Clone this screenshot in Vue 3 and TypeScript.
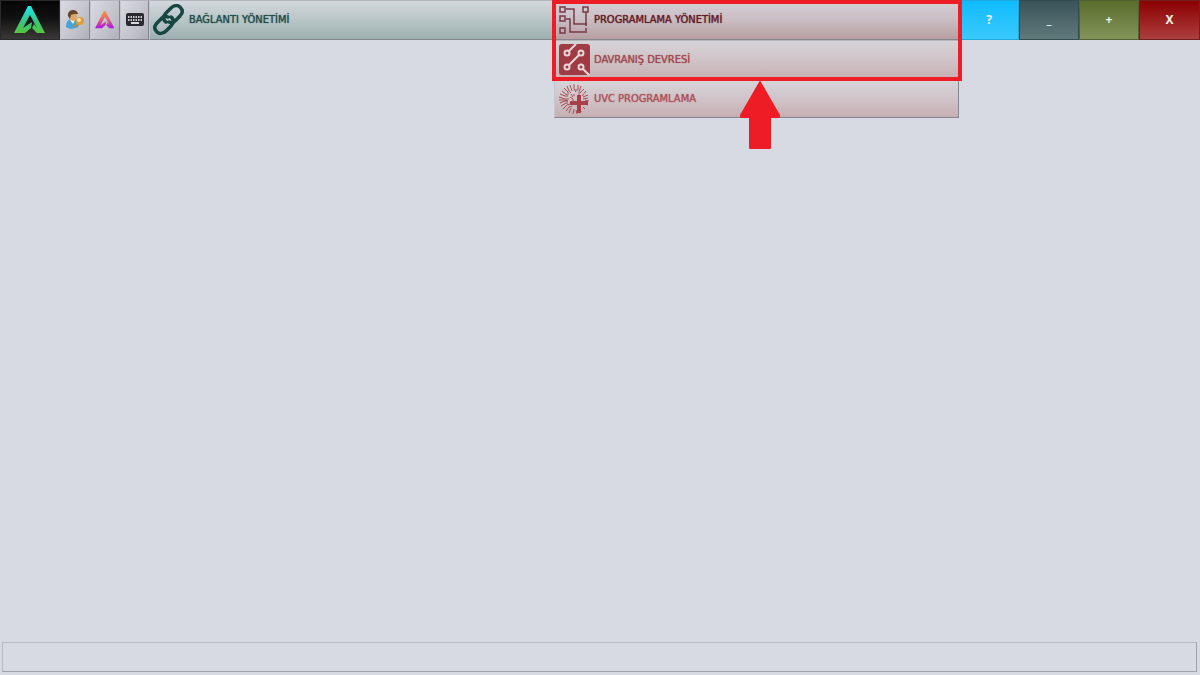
<script setup lang="ts">
interface WindowAction {
  id: string
  symbol: string
  label: string
}

const windowActions: WindowAction[] = [
  { id: 'help', symbol: '?', label: 'Yardım' },
  { id: 'minimize', symbol: '_', label: 'Küçült' },
  { id: 'maximize', symbol: '+', label: 'Büyüt' },
  { id: 'close', symbol: 'X', label: 'Kapat' },
]
</script>

<template>
  <div class="app">
    <header class="toolbar">
      <button class="logo" type="button" aria-label="Ana menü">
        <svg width="32" height="28" viewBox="0 0 32 28">
          <defs>
            <linearGradient id="green" x1="0" y1="0" x2="0" y2="1">
              <stop offset="0" stop-color="#20e8ee" />
              <stop offset="0.55" stop-color="#36c585" />
              <stop offset="1" stop-color="#57c53c" />
            </linearGradient>
          </defs>
          <path fill="url(#green)" d="M14 0h3l14 27h-8l-5-5 2-4 3 4-7-13-7 13 9-6-1 6-6 5H0z" />
        </svg>
      </button>
      <button class="tool" type="button" aria-label="Kullanıcı">
        <svg width="20" height="20" viewBox="0 0 20 20">
          <path d="M1 17c0-5 2-8 6-8 5 0 7 3 7 7-3 3-9 4-13 1z" fill="#4aa3d3" />
          <path d="M5 10l3 4 2-4z" fill="#e9f4f8" />
          <ellipse cx="8" cy="6" rx="4" ry="5" fill="#dda66b" />
          <path d="M3 6c-1-7 9-8 10-2L9 4 6 5 5 9z" fill="#69452a" />
          <path d="M9 16l4-4 2 2-4 3z" fill="#c98a30" />
          <circle cx="15" cy="11" r="4" fill="#e09c3c" />
          <circle cx="14" cy="10" r="2" fill="#ffdf9f" />
        </svg>
      </button>
      <button class="tool" type="button" aria-label="Uygulama">
        <svg width="20" height="18" viewBox="0 0 32 28">
          <defs>
            <linearGradient id="sunset" x1="0" y1="0" x2="0" y2="1">
              <stop offset="0" stop-color="#f79a35" />
              <stop offset="0.5" stop-color="#e2627e" />
              <stop offset="1" stop-color="#ac16df" />
            </linearGradient>
          </defs>
          <path fill="url(#sunset)" d="M14 0h3l14 27h-8l-5-5 2-4 3 4-7-13-7 13 9-6-1 6-6 5H0z" />
        </svg>
      </button>
      <button class="tool" type="button" aria-label="Klavye">
        <svg width="18" height="14" viewBox="0 0 18 14">
          <rect width="18" height="13" rx="2" fill="#29292f" />
          <path d="M2 4h14M2 7h14" stroke="#c5c5ca" stroke-width="2" stroke-dasharray="1.5 1" />
          <path d="M5 10h8" stroke="#d5d5da" stroke-width="2" />
        </svg>
      </button>

      <button class="menu link" type="button">
        <svg class="icon" width="32" height="32" viewBox="0 0 32 32" fill="none" stroke="#184640" stroke-width="3.5" stroke-linecap="round">
          <path d="M13 18c-3-2-3-6 0-9l5-5c3-3 7-3 9-1 3 3 3 6 0 9l-5 5c-2 2-4 2-6 1" />
          <path d="M18 13c3 2 3 6 0 9l-5 5c-3 3-7 3-9 1-3-3-3-6 0-9l5-5c2-2 4-2 6-1" />
        </svg>
        <span>BAĞLANTI YÖNETİMİ</span>
      </button>

      <div class="group">
        <button class="menu program" type="button" aria-expanded="true">
          <svg class="icon" width="32" height="32" viewBox="0 0 32 32" fill="none" stroke="#773b45">
            <path d="M2 3h5v5H2zM2 12h5v5H2zM2 24h5v5H2zM25 3h5v5h-5z" stroke-width="1.5" />
            <path d="M8 5h8v15h13M8 15h4v13h17M28 8v14m0 2v3" stroke-width="1.5" />
          </svg>
          <span>PROGRAMLAMA YÖNETİMİ</span>
        </button>
        <div class="dropdown">
          <button class="menu behaviour" type="button">
            <svg class="icon" width="32" height="32" viewBox="0 0 32 32">
              <rect x="1" width="31" height="31" rx="3" fill="#a03b43" />
              <g fill="none" stroke="#e8d8da" stroke-width="2">
                <circle cx="9" cy="9" r="2.5" />
                <circle cx="23" cy="9" r="2.5" />
                <circle cx="9" cy="23" r="2.5" />
                <circle cx="23" cy="23" r="2.5" />
                <path d="M11 7l7-7M21 11L11 21M25 25l6 6" />
              </g>
            </svg>
            <span>DAVRANIŞ DEVRESİ</span>
          </button>
          <button class="menu uvc" type="button">
            <svg class="icon" width="32" height="32" viewBox="0 0 32 32">
              <g fill="none" stroke="#a94d55">
                <path d="M12 2l2 6M16 1v5l2 3M20 2v5h-3M23 3l-2 6v3M26 6l-4 4M28 8l-4 5M30 12l-5 2M9 3l2 5 2 2M6 5l4 4v3M4 8l5 4M2 11l5 2h3M1 14l6 2h4M1 17h5l4 1M2 20l5-2h3M3 23l5-3h2M5 26l4-4 3-1M8 28l3-4 3-1M11 30l2-5M15 31l1-5M19 31l-1-4M23 29l-1-3M27 26l-2-2M30 22l-4-1M31 18l-4-1M30 15l-5 1" />
                <path d="M13 11l2 3M16 11v2M12 14l3 2M12 20h3M14 22l2-2M14 17h2" />
              </g>
              <path d="M19 12h4v6h7v4h-7v8h-4v-8h-7v-4h7z" fill="#a83e49" />
            </svg>
            <span>UVC PROGRAMLAMA</span>
          </button>
        </div>
        <div class="highlight"></div>
        <svg class="arrow" width="40" height="69" viewBox="0 0 40 69">
          <path d="M19 1q1-2 2 0l19 33q1 3-2 3h-7v30q0 1-1 1H10q-1 0-1-1V37H2q-3 0-2-3z" fill="#ee1c25" />
        </svg>
      </div>

      <button
        v-for="action in windowActions"
        :key="action.id"
        class="window"
        :class="action.id"
        type="button"
        :aria-label="action.label"
      >{{ action.symbol }}</button>
    </header>
    <main class="workspace"></main>
    <footer class="status"></footer>
  </div>
</template>

<style>
body {
  background: #d7dae2;
}
</style>

<style scoped>
.app {
  min-height: 100vh;
  display: flex;
  flex-direction: column;
  background: #d7dae2;
  font-family: "DejaVu Sans Condensed", "DejaVu Sans", sans-serif;
}
.toolbar {
  height: 40px;
  display: grid;
  grid-template-columns: 60px 30px 30px 29px repeat(2, minmax(0, 1fr)) repeat(3, 60px) 61px;
}
button {
  box-sizing: border-box;
  margin: 0;
  padding: 0;
  border: 1px solid;
  border-color: #b5b5bd #85858e #85858e #c5c5ce;
  font-family: inherit;
  cursor: pointer;
}
.logo,
.tool {
  display: flex;
  align-items: center;
  justify-content: center;
}
.logo {
  background: linear-gradient(#050505, #111 45%, #3b3937);
  border-color: #29292b;
}
.tool {
  background: linear-gradient(120deg, #dadae1, #c2c3cb 60%, #afb1b9);
}
.menu {
  width: 100%;
  height: 40px;
  display: flex;
  align-items: center;
  gap: 4px;
  padding-left: 3px;
  font-size: 11px;
  line-height: 16px;
  font-weight: 400;
  text-align: left;
  text-shadow: 0 0 1px currentColor;
}
.icon {
  flex: none;
}
.link {
  color: #244c4a;
  background: linear-gradient(#d4d8dc, #b8c5c7 50%, #9db0b0);
}
.group {
  position: relative;
}
.program {
  color: #671b25;
  background: linear-gradient(#d5d0d7, #c9bdc3 50%, #b79ea2);
}
.dropdown {
  position: absolute;
  top: 100%;
  left: 0;
  right: 0;
}
.behaviour,
.uvc {
  color: #a14850;
  background: linear-gradient(#d5d4d8, #d0c3c8 50%, #c6afb2);
}
.uvc {
  height: 38px;
  color: #ad505a;
}
.highlight {
  position: absolute;
  top: 0;
  left: -2px;
  right: -3px;
  height: 81px;
  box-sizing: border-box;
  border: 4px solid #ee1c25;
  pointer-events: none;
}
.arrow {
  position: absolute;
  top: 81px;
  left: 186px;
  pointer-events: none;
}
.window {
  color: #eef0e5;
  font-family: "Noto Sans", sans-serif;
  font-size: 12px;
  line-height: 16px;
  font-weight: 700;
}
.help {
  background: linear-gradient(#0fbcff, #3ac9fb);
  border-color: #20a8da;
}
.minimize {
  background: linear-gradient(#395459, #60797b);
  border-color: #344c50;
}
.maximize {
  background: linear-gradient(#596d2c, #84945b);
  border-color: #526334;
}
.close {
  background: linear-gradient(#8c0000, #ac3e3e);
  border-color: #702020;
}
.workspace {
  flex: 1;
}
.status {
  height: 28px;
  margin: 0 3px 3px 2px;
  border: 1px solid;
  border-color: #b6b9c0 #9da3aa #9da3aa #b6b9c0;
}
</style>
